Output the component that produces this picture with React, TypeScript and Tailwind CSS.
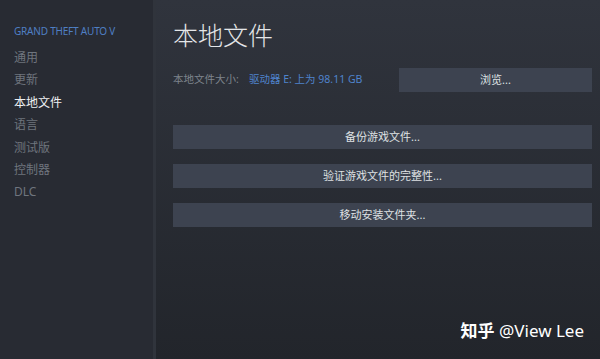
import React from "react"

const navItems = ["通用", "更新", "本地文件", "语言", "测试版", "控制器", "DLC"]
const actions = ["备份游戏文件...", "验证游戏文件的完整性...", "移动安装文件夹..."]

export default function App() {
  return (
    <div
      className="relative flex h-[359px] w-[600px] overflow-hidden"
      style={{ fontFamily: '"Noto Sans", "Noto Sans CJK SC", sans-serif' }}
    >
      {/* sidebar */}
      <div className="flex w-[153px] flex-col bg-[#282b33] pl-[14px] pt-[23px]">
        <div className="text-[10px] leading-[16px] tracking-[-0.2px] text-[#4f7fc4]">GRAND THEFT AUTO V</div>
        <div className="mt-[8px] flex flex-col">
          {navItems.map((item) => (
            <div
              key={item}
              className={`h-[22.4px] text-[12px] leading-[22px] ${
                item === "本地文件" ? "text-[#eef0f2]" : "text-[#6f757e]"
              }`}
            >
              {item}
            </div>
          ))}
        </div>
      </div>
      <div className="w-[3px] bg-[#30343c]" />

      {/* main */}
      <div className="flex flex-1 flex-col bg-gradient-to-b from-[#30343d] to-[#22252b] pl-[17px] pr-[8px]">
        <h1 className="mt-[18px] text-[25px] font-light leading-[34px] text-[#e4e6e8]">本地文件</h1>
        <div className="mt-[16px] flex h-[24px] items-center">
          <span className="w-[76px] text-[10.5px] text-[#7e848c]">本地文件大小:</span>
          <span className="text-[10.5px] text-[#4f83cc]">驱动器 E: 上为 98.11 GB</span>
          <button className="ml-auto h-[24px] w-[193px] bg-[#3d4350] text-[11px] text-[#dfe1e3]">浏览...</button>
        </div>
        <div className="mt-[33px] flex flex-col gap-[15px]">
          {actions.map((a) => (
            <button key={a} className="h-[24px] w-full bg-[#3d4350] text-[11px] text-[#dfe1e3]">
              {a}
            </button>
          ))}
        </div>
      </div>

      <div className="absolute right-[16px] top-[318px] text-[17px] text-white">
        <span className="font-bold">知乎</span> @View Lee
      </div>
    </div>
  )
}
